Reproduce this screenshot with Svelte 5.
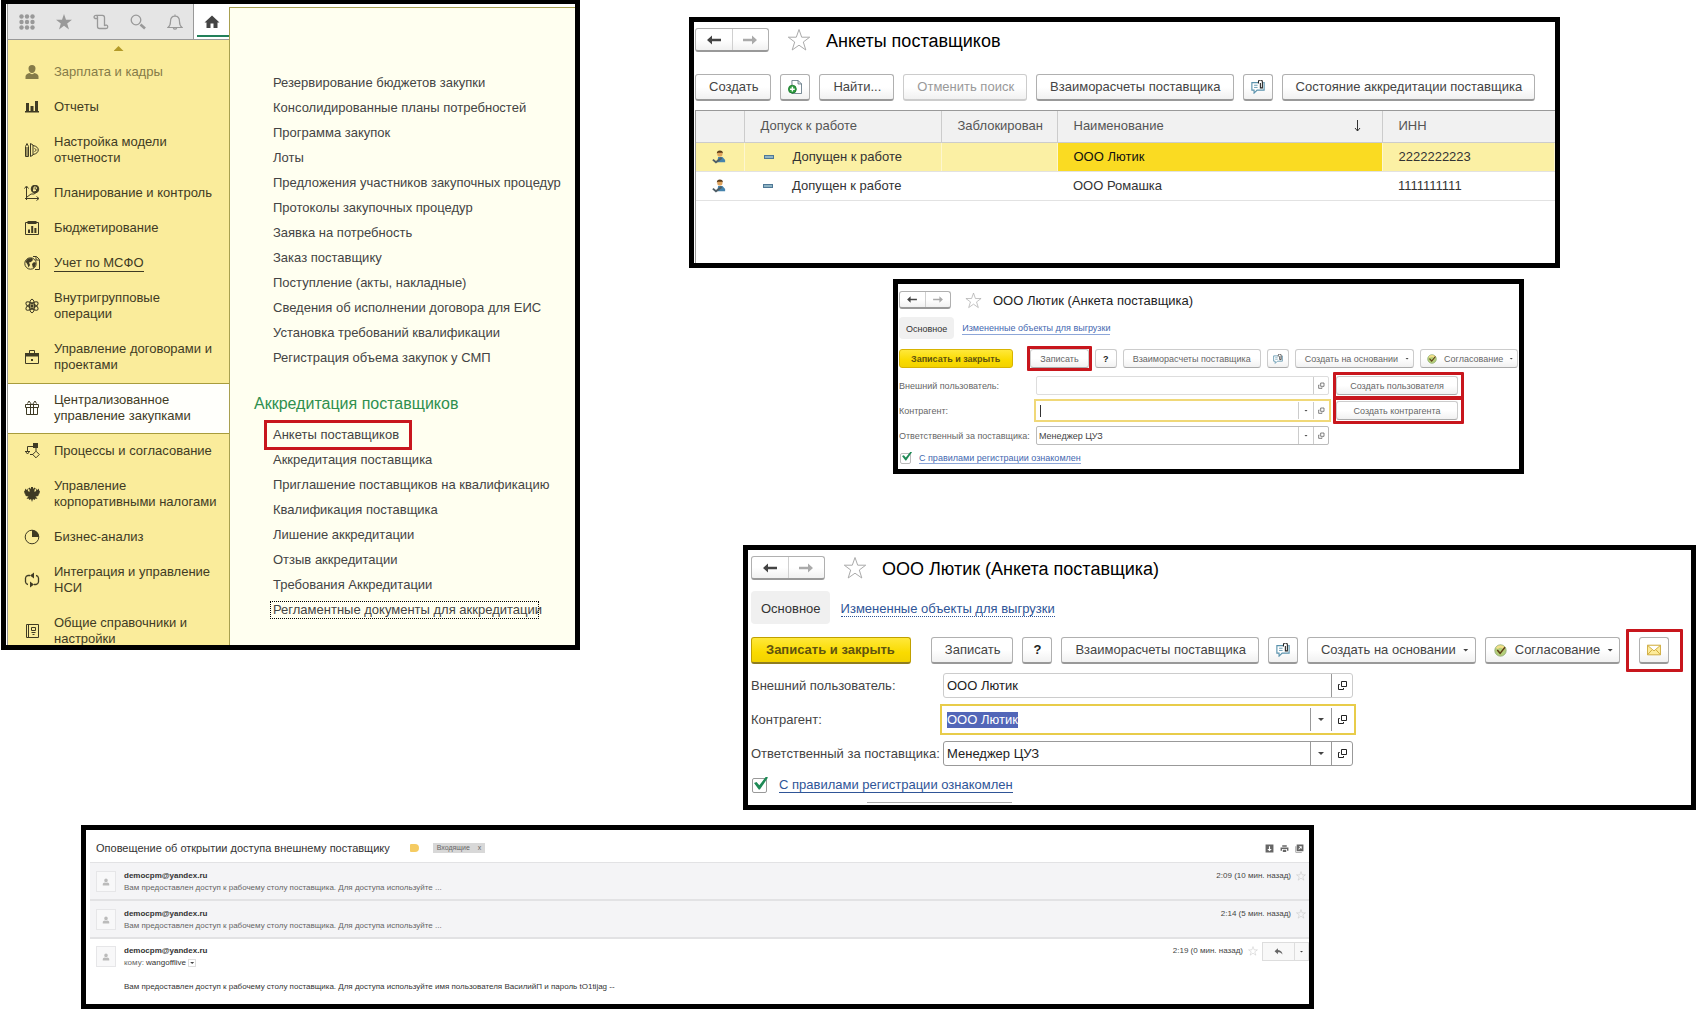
<script lang="ts">
	type Section = { icon: string; label: string; state?: string };
	type Field = { label: string; value: string; state?: string; dropdown?: boolean; action?: string };
	type Card = { id: string; size: string; fields: Field[]; mail?: boolean; markSave?: boolean };

	const tools = ['grid', 'star', 'scroll', 'search', 'bell'];

	const sections: Section[] = [
		{ icon: 'person', label: 'Зарплата и кадры', state: 'faded' },
		{ icon: 'bars', label: 'Отчеты' },
		{ icon: 'ruler', label: 'Настройка модели отчетности' },
		{ icon: 'plan', label: 'Планирование и контроль' },
		{ icon: 'budget', label: 'Бюджетирование' },
		{ icon: 'globe', label: 'Учет по МСФО', state: 'hovered' },
		{ icon: 'atom', label: 'Внутригрупповые операции' },
		{ icon: 'case', label: 'Управление договорами и проектами' },
		{ icon: 'gift', label: 'Централизованное управление закупками', state: 'active' },
		{ icon: 'process', label: 'Процессы и согласование' },
		{ icon: 'eagle', label: 'Управление корпоративными налогами' },
		{ icon: 'pie', label: 'Бизнес-анализ' },
		{ icon: 'sync', label: 'Интеграция и управление НСИ' },
		{ icon: 'book', label: 'Общие справочники и настройки' }
	];

	const purchases = [
		'Резервирование бюджетов закупки',
		'Консолидированные планы потребностей',
		'Программа закупок',
		'Лоты',
		'Предложения участников закупочных процедур',
		'Протоколы закупочных процедур',
		'Заявка на потребность',
		'Заказ поставщику',
		'Поступление (акты, накладные)',
		'Сведения об исполнении договора для ЕИС',
		'Установка требований квалификации',
		'Регистрация объема закупок у СМП'
	];

	const accreditation = [
		{ label: 'Анкеты поставщиков', state: 'boxed' },
		{ label: 'Аккредитация поставщика' },
		{ label: 'Приглашение поставщиков на квалификацию' },
		{ label: 'Квалификация поставщика' },
		{ label: 'Лишение аккредитации' },
		{ label: 'Отзыв аккредитации' },
		{ label: 'Требования Аккредитации' },
		{ label: 'Регламентные документы для аккредитации', state: 'focused' }
	];

	const suppliers = [
		{ name: 'ООО Лютик', inn: '2222222223', selected: true },
		{ name: 'ООО Ромашка', inn: '1111111111', selected: false }
	];

	const draft: Card = {
		id: 'draft',
		size: 'small',
		markSave: true,
		fields: [
			{ label: 'Внешний пользователь:', value: '', state: 'pale', action: 'Создать пользователя' },
			{ label: 'Контрагент:', value: '', state: 'current caret', dropdown: true, action: 'Создать контрагента' },
			{ label: 'Ответственный за поставщика:', value: 'Менеджер ЦУЗ', dropdown: true }
		]
	};

	const saved: Card = {
		id: 'saved',
		size: 'large',
		mail: true,
		fields: [
			{ label: 'Внешний пользователь:', value: 'ООО Лютик', state: 'pale' },
			{ label: 'Контрагент:', value: 'ООО Лютик', state: 'current selected', dropdown: true },
			{ label: 'Ответственный за поставщика:', value: 'Менеджер ЦУЗ', dropdown: true }
		]
	};

	const oldMessages = ['2:09 (10 мин. назад)', '2:14 (5 мин. назад)'];

	function preselect(node: HTMLInputElement, on: boolean) {
		if (on) {
			node.focus({ preventScroll: true });
			node.select();
		}
	}
</script>

{#snippet icon(name: string)}
	<svg class="icon" viewBox="0 0 16 16" aria-hidden="true" fill="none" stroke="currentColor">
		{#if name === 'grid'}
			<g fill="currentColor" stroke="none">
				{#each [2.5, 8, 13.5] as cx}
					{#each [2.5, 8, 13.5] as cy}
						<circle {cx} {cy} r="2.2" />
					{/each}
				{/each}
			</g>
		{:else if name === 'star'}
			<path fill="currentColor" stroke="none" d="M8 0l2 5.8h6l-4.8 3.6L13 15.4 8 11.8l-5 3.6 1.8-6L0 5.8h6z" />
		{:else if name === 'scroll'}
			<path stroke-width="1.3" d="M4 4.500H2a1.700 1.700 0 1 1 2.500-1.500v9.500a2 2 0 0 0 2 2H13a1.700 1.700 0 1 0-1.500-2.500V3.500a2.200 2.200 0 0 0-2-2.200H2.500" />
		{:else if name === 'search'}
			<circle cx="6" cy="6" r="4.8" stroke-width="1.3" />
			<path stroke-width="2.6" d="M10.5 10.5l4.5 4" />
		{:else if name === 'bell'}
			<path stroke-width="1.2" d="M8 .5V2M1 13.500c2-1.500 2.500-3 2.500-6C3.500 4 5.500 2.200 8 2.200S12.500 4 12.500 7.500c0 3 .5 4.500 2.500 6zM6.300 14a1.800 1.800 0 0 0 3.400 0" />
		{:else if name === 'home'}
			<path fill="currentColor" stroke="none" d="M8 1.500L.5 8.500h2V14h4V9.500h3V14h4V8.500h2z" />
		{:else if name === 'person'}
			<path fill="currentColor" stroke="none" d="M8 1a3.500 3.500 0 0 1 3.500 3.500C11.500 7 10 9 8 9S4.500 7 4.500 4.500A3.500 3.500 0 0 1 8 1zM1.500 15v-2.500c0-2 2-3 4-3.500 1.500 1.500 3.500 1.500 5 0 2 .5 4 1.500 4 3.500V15z" />
		{:else if name === 'bars'}
			<path fill="currentColor" stroke="none" d="M2 4h3v8h1.500V7h3v5H11V2h3v10h1v1.500H1V12h1z" />
		{:else if name === 'ruler'}
			<path d="M1.500 4.500L3 1.500l1.500 3v10h-3zM3 5v9M6.500 1.500v13M6.500 1.500l2.500 1.500v10l-2.500 1.500M9 3.500c7 1 7 8 0 9M10.500 6.500c2 .5 2 2.500 0 3" />
		{:else if name === 'plan'}
			<path d="M2.500 15V2M.5 3.500l2-2.500 2 2.500M1 13.500h13.500M12.500 11.500l2.500 2-2.500 2M3 12l4-3h3l3-2" />
			<circle cx="11" cy="4" r="3.8" fill="currentColor" />
			<path stroke="#faec9b" d="M10 6.500V2h1.500a1 1 0 0 1 0 2.200H9M9 5.500h3" />
		{:else if name === 'budget'}
			<path d="M1.500 2.500h13v12h-13z" />
			<path fill="currentColor" stroke="none" d="M3.500 1h9v3h-9zM4 9.500h2V13H4zM7.200 6h2v7h-2zM10.400 8h2v5h-2z" />
		{:else if name === 'globe'}
			<path d="M9 1.500h3.500l3 3v10H11M12 1.500v3.500h3" />
			<circle cx="6.500" cy="8.500" r="5.700" fill="#faec9b" />
			<path fill="currentColor" stroke="none" d="M1.500 6.500L4 3.500l4-.5 1 2-2 2-2 .5L6 10l-1.500 2.500-1-3zM8 9l2-2 2 1-1 3.500-2 1.500z" />
		{:else if name === 'atom'}
			<ellipse cx="8" cy="8" rx="2.6" ry="6.8" />
			<ellipse cx="8" cy="8" rx="2.6" ry="6.8" transform="rotate(60 8 8)" />
			<ellipse cx="8" cy="8" rx="2.6" ry="6.8" transform="rotate(120 8 8)" />
			<circle cx="8" cy="8" r="1.2" fill="currentColor" />
		{:else if name === 'case'}
			<path d="M1.500 4.500h13v10h-13zM5.500 4V1.500h5V4" />
			<path fill="currentColor" stroke="none" d="M1 4h14v3.500H1zM7 10h2v2H7z" />
		{:else if name === 'gift'}
			<path d="M1.500 4.500h13v3h-13zM2.500 7.500h11v7h-11zM6.500 4.500v10M9.500 4.500v10M7.500 4.500L5 1 3.500 3.500M8.500 4.500L11 1l1.500 2.500" />
		{:else if name === 'process'}
			<path d="M9 3.500H3.500V8M1 8.500h5M1.500 8.500l2 2.500 2-2.500M6 11.500h3M12 5v3M12 8.200l3.300 3.300-3.300 3.300-3.300-3.300z" />
			<path fill="currentColor" stroke="none" d="M9 0h5v5H9z" />
		{:else if name === 'eagle'}
			<path fill="currentColor" stroke="none" d="M7 1h2v2l1.500-1.500L12 3l-1.500.5V6L12 5l.5-2.500 1 1.500L15 2.500V5l1-.5-.5 3-1 .5.5 1-2 1.500-1.500-.5 2 3-2-.5-1 1.500L9 13l-1 3-1-3-1.500 1L4.500 12.500l-2 .5 2-3-1.500.5L1 9l.5-1-1-.5L0 4.500l1 .5V2.500L2.500 4l1-1.500L4 5l1.500 1V3.500L4 3l1.500-1.500L7 3z" />
		{:else if name === 'pie'}
			<circle cx="8" cy="8" r="6.8" />
			<path fill="currentColor" stroke="none" d="M8 1a7 7 0 0 1 7 7H8z" />
		{:else if name === 'sync'}
			<path stroke-width="1.3" d="M6 3.500H4A3 3 0 0 0 1.500 6v4A3 3 0 0 0 4 12.500M10 12.500h2a3 3 0 0 0 2.500-2.500V6A3 3 0 0 0 12 3.500" />
			<path fill="currentColor" stroke="none" d="M10 .5v6l-4-3zM6 9.500v6l4-3z" />
		{:else if name === 'book'}
			<path d="M2.500 1.500h12v13h-12zM4.500 1.500v13M7.500 4.500h4v3h-4zM7.500 9.500h4M8.500 11.500h2" />
		{:else if name === 'copy'}
			<path stroke="#5e7480" fill="#fff" d="M4.500.5h7l4 4v11h-11zM11.500.5v4h4" />
			<circle cx="5" cy="10.500" r="4.500" fill="#2f9e41" stroke="#1d7a2e" />
			<path stroke="#fff" stroke-width="1.6" d="M2.300 10.500h5.400M5 7.800v5.400" />
		{:else if name === 'clip'}
			<path stroke="#5b93ad" stroke-width="1.3" fill="#fff" d="M8 3H1v8.500h2.500V15L7 11.500h8V3h-1" />
			<path stroke="#5b93ad" d="M3.500 6h4M3.500 8.500h4" />
			<path stroke="#222" stroke-width="1.2" d="M8.500 4V2.200a2.200 2.200 0 0 1 4.500 0V9h-2.300V3.500" />
		{:else if name === 'approve'}
			<circle cx="8" cy="8" r="7" fill="#b5cf7a" stroke="#8fa873" />
			<path stroke="#f3e08a" stroke-width="3" d="M3.500 5.500a5.500 5.500 0 0 1 9 0" />
			<path stroke="#5d3d16" stroke-width="1.8" d="M4 7.500l3.500 4L13.500 4" />
		{:else if name === 'mail'}
			<path stroke="#c9a22f" fill="#fdeb9a" d="M.5 2.500h15v11H.5zM1 3l7 6 7-6M1 13l4.500-5M15 13l-4.500-5" />
		{:else if name === 'open'}
			<path stroke-width="1.33" d="M7.330 2H14v6.670H7.330zM5 6H3.330v6.670H10v-2" />
		{:else if name === 'supplier'}
			<path fill="#4583ad" stroke="none" d="M7 8h5l3 3.500V14H6z" />
			<circle cx="9" cy="4.500" r="3" fill="#e0a35c" stroke="none" />
			<path fill="#5b3b18" stroke="none" d="M5.500 4a3.500 3.500 0 0 1 7 0l-1-.8H7z" />
			<path stroke="#4f5e66" stroke-width="2.2" d="M1 11l3.500 3L11 9" />
		{:else if name === 'down'}
			<path fill="currentColor" stroke="none" d="M1 1h14v14H1zM7 4v5H4l4 4 4-4H9V4z" fill-rule="evenodd" />
		{:else if name === 'print'}
			<path fill="currentColor" stroke="none" d="M4 2h8v3H4zM1 6h14v6h-2.500V9h-9v3H1zM5 10h6v4H5z" />
		{:else if name === 'window'}
			<path fill="currentColor" stroke="none" d="M3 1h12v12H3zM1 4v11h11v-1H2V4zM7 4h5v5l-2-2-3 3-1-1 3-3z" fill-rule="evenodd" />
		{:else if name === 'reply'}
			<path fill="currentColor" stroke="none" d="M7 2v3.500c5 .5 8 3.500 8 8-2-3-4-4-8-4V13L1 7.500z" />
		{/if}
	</svg>
{/snippet}

{#snippet star()}
	<svg class="star" viewBox="0 0 24 24" aria-hidden="true">
		<path fill="none" stroke="currentColor" d="M12 1.500l2.700 7.700h8L16.300 14l2.500 8-6.800-4.800L5.200 22l2.500-8-6.400-4.800h8z" />
	</svg>
{/snippet}

{#snippet heading(title: string)}
	<header class="heading">
		<div class="history">
			<button aria-label="Назад"><svg viewBox="0 0 14 10"><path d="M0 5l5-4.500v3.300h9v2.400H5v3.300z" /></svg></button>
			<button aria-label="Вперед" disabled><svg viewBox="0 0 14 10"><path d="M14 5L9 .5v3.300H0v2.400h9v3.300z" /></svg></button>
		</div>
		{@render star()}
		<h1>{title}</h1>
	</header>
{/snippet}

{#snippet card(c: Card)}
	<section class="window card {c.size}">
		{@render heading('ООО Лютик (Анкета поставщика)')}
		<nav class="tabs">
			<a class="tab" href="#main">Основное</a>
			<a class="dotted" href="#export">Измененные объекты для выгрузки</a>
		</nav>
		<div class="toolbar">
			<button class="btn primary">Записать и закрыть</button>
			<button class="btn" class:marked={c.markSave}>Записать</button>
			<button class="btn square help">?</button>
			<button class="btn">Взаиморасчеты поставщика</button>
			<button class="btn square" aria-label="Вложения">{@render icon('clip')}</button>
			<button class="btn more">Создать на основании<i></i></button>
			<button class="btn more approve">{@render icon('approve')}Согласование<i></i></button>
			{#if c.mail}
				<button class="btn square send marked" aria-label="Отправить письмо">{@render icon('mail')}</button>
			{/if}
		</div>
		<div class="fields">
			{#each c.fields as field, i}
				<div class="field">
					<label for="{c.id}-{i}">{field.label}</label>
					<div class="box {field.state}">
						<input id="{c.id}-{i}" value={field.value} use:preselect={field.state === 'current selected'} />
						{#if field.dropdown}
							<button class="arrow" aria-label="Выбрать"><i></i></button>
						{/if}
						<button class="open" aria-label="Открыть">{@render icon('open')}</button>
					</div>
					{#if field.action}
						<button class="btn action marked">{field.action}</button>
					{/if}
				</div>
			{/each}
		</div>
		<div class="rules">
			<input type="checkbox" id="{c.id}-rules" checked />
			<label for="{c.id}-rules"><a href="#rules">С правилами регистрации ознакомлен</a></label>
		</div>
		{#if c.mail}
			<div class="cut"></div>
		{/if}
	</section>
{/snippet}

<main>
	<div class="columns">
		<section class="window menu">
			<aside>
				<div class="tools">
					{#each tools as tool}
						<button aria-label={tool}>{@render icon(tool)}</button>
					{/each}
					<button class="home" aria-label="home">{@render icon('home')}</button>
				</div>
				<nav class="sections">
					<div class="scroll-up"></div>
					{#each sections as section}
						<a class="section {section.state}" href="#section">
							{@render icon(section.icon)}
							<span>{section.label}</span>
						</a>
					{/each}
				</nav>
			</aside>
			<nav class="commands">
				<ul>
					{#each purchases as label}
						<li><a href="#command">{label}</a></li>
					{/each}
				</ul>
				<h2>Аккредитация поставщиков</h2>
				<ul>
					{#each accreditation as item}
						<li><a class={item.state} href="#command">{item.label}</a></li>
					{/each}
				</ul>
			</nav>
		</section>

		<div class="right">
			<section class="window list">
				{@render heading('Анкеты поставщиков')}
				<div class="toolbar">
					<button class="btn">Создать</button>
					<button class="btn square" aria-label="Скопировать">{@render icon('copy')}</button>
					<button class="btn">Найти...</button>
					<button class="btn" disabled>Отменить поиск</button>
					<button class="btn">Взаиморасчеты поставщика</button>
					<button class="btn square" aria-label="Вложения">{@render icon('clip')}</button>
					<button class="btn">Состояние аккредитации поставщика</button>
				</div>
				<div class="table">
					<table>
						<colgroup>
							<col class="c-icon" /><col class="c-access" /><col class="c-block" /><col class="c-name" /><col />
						</colgroup>
						<thead>
							<tr>
								<th></th>
								<th>Допуск к работе</th>
								<th>Заблокирован</th>
								<th><span class="sorted">Наименование
									<svg viewBox="0 0 7 12" aria-hidden="true"><path d="M3.500 0v11M1 8l2.500 3L6 8" /></svg></span></th>
								<th>ИНН</th>
							</tr>
						</thead>
						<tbody>
							{#each suppliers as supplier}
								<tr class:selected={supplier.selected}>
									<td class="who">{@render icon('supplier')}</td>
									<td><span class="access"><i></i>Допущен к работе</span></td>
									<td></td>
									<td class="name">{supplier.name}</td>
									<td>{supplier.inn}</td>
								</tr>
							{/each}
						</tbody>
					</table>
				</div>
			</section>

			{@render card(draft)}
			{@render card(saved)}
		</div>
	</div>

	<section class="window inbox">
		<header class="subject">
			<h3>Оповещение об открытии доступа внешнему поставщику</h3>
			<span class="flag"></span>
			<span class="chip">Входящие <b>x</b></span>
			<span class="actions">
				{@render icon('down')}
				{@render icon('print')}
				{@render icon('window')}
			</span>
		</header>
		{#each oldMessages as time}
			<article class="message old">
				<span class="avatar">{@render icon('person')}</span>
				<div class="text">
					<strong>democpm@yandex.ru</strong>
					<p>Вам предоставлен доступ к рабочему столу поставщика. Для доступа используйте ...</p>
				</div>
				<time>{time}</time>
				{@render star()}
			</article>
		{/each}
		<article class="message">
			<span class="avatar">{@render icon('person')}</span>
			<div class="text">
				<strong>democpm@yandex.ru</strong>
				<p>кому: <em>wangofflive</em> <button class="details" aria-label="Подробнее"><i></i></button></p>
				<p class="body">Вам предоставлен доступ к рабочему столу поставщика. Для доступа используйте имя пользователя ВасилийП и пароль tO1tijag --</p>
			</div>
			<time>2:19 (0 мин. назад)</time>
			{@render star()}
			<div class="reply">
				<button aria-label="Ответить">{@render icon('reply')}</button>
				<button aria-label="Еще"><i></i></button>
			</div>
		</article>
	</section>
</main>

<style>
	:global(body) {
		background: #fff;
	}

	* {
		box-sizing: border-box;
	}

	main {
		font: 13px/16px 'Liberation Sans', Arial, sans-serif;
		color: #444;
		overflow: hidden;
	}

	a {
		color: inherit;
		text-decoration: none;
	}

	button,
	input {
		font: inherit;
		color: inherit;
		margin: 0;
	}

	button {
		padding: 0;
		border: none;
		background: none;
	}

	h1,
	h2,
	h3,
	p,
	ul {
		margin: 0;
		padding: 0;
		font-weight: normal;
	}

	.icon {
		width: 16px;
		height: 16px;
		flex: none;
		display: block;
	}

	.columns {
		display: grid;
		grid-template-columns: 290fr 558fr;
		align-items: start;
	}

	.window {
		border: 5px solid #000;
		background: #fff;
	}

	/* sections and commands */
	.menu {
		display: flex;
		max-height: 650px;
		margin-left: 1px;
		border-top-width: 4px;
		overflow: hidden;
	}

	aside {
		flex: none;
		width: 222px;
		margin-left: 1px;
		border-left: 1px solid #999;
	}

	.tools {
		display: flex;
		height: 36px;
		background: #e5e5e5;
		border-bottom: 1px solid #999;
		color: #999;
	}

	.tools button {
		flex: 0 0 37px;
		display: flex;
		align-items: center;
		justify-content: center;
	}

	.tools .home {
		flex: 1;
		border-left: 1px solid #999;
		background: linear-gradient(#22805a, #22805a) 3px 31px / 100% 2px no-repeat #fff;
		color: #444;
	}

	.sections {
		background: #faec9b;
	}

	.scroll-up {
		height: 15px;
		padding-top: 6px;
	}

	.scroll-up::before {
		content: '';
		display: block;
		width: 10px;
		height: 5px;
		margin: 0 auto;
		background: #b39a28;
		clip-path: polygon(50% 0, 100% 100%, 0 100%);
	}

	.section {
		display: flex;
		align-items: center;
		gap: 14px;
		padding: 9px 10px 10px 16px;
		color: #3f3b24;
	}

	.section.faded {
		color: #857b48;
	}

	.section.hovered span {
		border-bottom: 1px solid #3f3b24;
		margin-bottom: -1px;
	}

	.section.active {
		padding-top: 8px;
		padding-bottom: 9px;
		border: 1px solid #a89c3c;
		border-width: 1px 0;
		background: #fffffb;
	}

	.commands {
		flex: 1;
		min-width: 0;
		margin-top: 3px;
		padding: 62px 0 24px 24px;
		border: 1px solid #a8a050;
		border-width: 1px 0 0 1px;
		background: #fffff0;
		white-space: nowrap;
	}

	.commands ul {
		list-style: none;
		padding-left: 19px;
	}

	.commands li {
		display: flex;
		align-items: center;
		height: 25px;
	}

	.commands h2 {
		margin: 21px 0 6px;
		font-size: 16px;
		line-height: 25px;
		color: #2f8f4e;
	}

	.boxed {
		margin-left: -6px;
		padding: 4px 10px 4px 6px;
		outline: 3px solid #c8161d;
	}

	.focused {
		width: 269px;
		margin-left: -3px;
		padding-left: 2px;
		border: 1px dotted #000;
	}

	/* window parts */
	.right {
		min-width: 0;
	}

	.heading {
		display: flex;
		align-items: center;
		height: 24px;
	}

	.history {
		display: flex;
		width: 74px;
		height: 24px;
		border: 1px solid #b0b0b0;
		border-bottom: 2px solid #999;
		border-radius: 3px;
		background: linear-gradient(#fff 50%, #f1f1f1);
	}

	.history button {
		flex: 1;
		display: flex;
		align-items: center;
		justify-content: center;
	}

	.history button + button {
		border-left: 1px solid #d0d0d0;
	}

	.history svg {
		width: 14px;
		height: 10px;
		fill: #444;
	}

	.history button:disabled svg {
		fill: #aaa;
	}

	.star {
		flex: none;
		width: 24px;
		height: 24px;
		margin-left: 18px;
		color: #aaa;
	}

	h1 {
		margin-left: 15px;
		padding-top: 2px;
		font-size: 18px;
		line-height: 24px;
		color: #000;
		white-space: nowrap;
	}

	.toolbar {
		display: flex;
		gap: 9px;
	}

	.btn {
		flex: none;
		display: flex;
		align-items: center;
		justify-content: center;
		height: 27px;
		padding: 0 12px 0 13px;
		border: 1px solid #b0b0b0;
		border-bottom: 2px solid #999;
		border-radius: 3px;
		background: linear-gradient(#fff 50%, #f1f1f1);
		white-space: nowrap;
	}

	.btn:disabled {
		border-color: #ccc;
		color: #999;
	}

	.square {
		width: 30px;
		padding: 0;
	}

	.square .icon {
		width: 14px;
		height: 14px;
	}

	.primary {
		margin-right: 11px;
		padding: 0 15px 0 14px;
		border-color: #c0a000;
		border-bottom-color: #8f7d20;
		background: linear-gradient(#ffe83a, #fadb00 60%, #f2d200);
		font-weight: bold;
		color: #5f5310;
	}

	.help {
		font-weight: bold;
		color: #222;
	}

	i {
		display: block;
		width: 6px;
		height: 3px;
		background: #444;
		clip-path: polygon(0 0, 100% 0, 50% 100%);
	}

	.more {
		gap: 7px;
		padding-right: 6px;
	}

	.approve {
		padding-left: 8px;
	}

	.approve .icon {
		width: 13px;
		height: 13px;
		margin-right: 1px;
	}

	.marked {
		position: relative;
	}

	.marked::after {
		content: '';
		position: absolute;
		inset: -4px;
		border: 3px solid #c8161d;
		border-radius: 1px;
	}

	/* supplier list */
	.list {
		margin: 17px 136px 0 109px;
		padding: 6px 0 0 1px;
	}

	.list .toolbar {
		margin: 22px 0 9px;
	}

	.table {
		min-height: 153px;
		border: 1px solid #999;
		border-width: 1px 0 0 1px;
		overflow: hidden;
	}

	table {
		width: 100%;
		table-layout: fixed;
		border-collapse: collapse;
	}

	.c-icon {
		width: 48px;
	}

	.c-access {
		width: 197px;
	}

	.c-block {
		width: 116px;
	}

	.c-name {
		width: 325px;
	}

	th,
	td {
		padding: 0 0 0 16px;
		text-align: left;
		font-weight: normal;
		white-space: nowrap;
	}

	th {
		height: 31px;
		border-right: 1px solid #ccc;
		border-bottom: 1px solid #ccc;
		background: #f1f1f1;
		color: #555;
	}

	td {
		height: 29px;
		border-bottom: 1px solid #e2e2e2;
		color: #333;
	}

	th:last-child {
		border-right: none;
	}

	.selected td {
		border-right: 1px solid #fdf6cf;
		background: #fbf0a4;
	}

	.selected .name {
		background: #fadb22;
		color: #111;
	}

	.who .icon {
		width: 14px;
		height: 14px;
	}

	.sorted {
		display: flex;
		align-items: center;
		justify-content: space-between;
		padding-right: 21px;
	}

	.sorted svg {
		width: 7px;
		height: 12px;
		fill: none;
		stroke: #333;
	}

	.access {
		display: flex;
		align-items: center;
		gap: 19px;
		padding-left: 3px;
	}

	.access i {
		width: 10px;
		height: 4px;
		border: 1px solid #4f7896;
		background: #8fb4c4;
		clip-path: none;
	}

	/* supplier card */
	.card {
		padding: 6px 0 2px 3px;
	}

	.large {
		margin: 71px 0 0 163px;
	}

	.tabs {
		display: flex;
		align-items: center;
		gap: 11px;
		height: 33px;
		margin: 11px 0 13px;
	}

	.tab {
		height: 100%;
		padding: 10px 9px 0 10px;
		border-radius: 4px;
		background: #f0f0f0;
		color: #333;
	}

	.dotted {
		padding-top: 2px;
		border-bottom: 1px dotted #2f5597;
		line-height: 15px;
		color: #2f5597;
	}

	.fields {
		display: grid;
		gap: 9px;
		margin-top: 9px;
	}

	.field {
		display: grid;
		grid-template-columns: 192px minmax(0, 410px) auto;
		justify-content: start;
		align-items: center;
		height: 25px;
		white-space: nowrap;
	}

	.box {
		display: flex;
		height: 100%;
		border: 1px solid #999;
		border-radius: 3px;
		color: #222;
	}

	.box input {
		flex: 1;
		min-width: 0;
		padding: 0 3px;
		border: none;
		outline: none;
		background: none;
	}

	.box input::selection {
		background: #5266b8;
		color: #fff;
	}

	.box button {
		display: flex;
		align-items: center;
		justify-content: center;
		width: 21px;
		border-left: 1px solid #999;
	}

	.box .icon {
		width: 12px;
		height: 12px;
	}

	.pale {
		border-color: #ccc;
	}

	.current {
		border-color: transparent;
		border-radius: 0;
		outline: 2px solid #e8cc4a;
		outline-offset: 1px;
	}

	.caret input {
		background: linear-gradient(#333, #333) 3px center / 1px 12px no-repeat;
	}

	.rules {
		display: flex;
		align-items: center;
		gap: 12px;
		height: 22px;
		margin: 8px 0 0 1px;
	}

	.rules input {
		appearance: none;
		position: relative;
		width: 15px;
		height: 15px;
		border: 1px solid #999;
		border-radius: 2px;
	}

	.rules input::before {
		content: '';
		position: absolute;
		inset: -2px -2px 2px 1px;
		background: #1f8a56;
		clip-path: polygon(0 50%, 18% 42%, 38% 68%, 86% 0, 100% 8%, 42% 100%, 34% 100%);
	}

	.rules a {
		border-bottom: 1px solid #2f5597;
		color: #2f5597;
	}

	.send {
		margin-left: 10px;
	}

	.send.marked::after {
		inset: -9px -15px -10px -14px;
	}

	.cut {
		width: 145px;
		height: 1px;
		margin: 6px 0 0 116px;
		background: #aaa;
	}

	.small {
		margin: 11px 172px 0 313px;
		padding: 7px 0 3px 1px;
		font-size: 9px;
		line-height: 12px;
		color: #666;
	}

	.small .heading {
		height: 18px;
	}

	.small .history {
		width: 52px;
		height: 18px;
	}

	.small .history svg {
		width: 10px;
		height: 7px;
	}

	.small .star {
		width: 17px;
		height: 17px;
		margin-left: 14px;
	}

	.small h1 {
		margin-left: 11px;
		font-size: 13px;
		line-height: 18px;
		color: #222;
	}

	.small .tabs {
		gap: 8px;
		height: 22px;
		margin: 8px 0 10px;
	}

	.small .tab {
		padding: 6px 7px 0;
	}

	.small .dotted {
		line-height: 11px;
		border-bottom: 1px solid #8da6d8;
		color: #4467b0;
	}

	.small .toolbar {
		gap: 6px;
	}

	.small .btn {
		height: 19px;
		padding: 0 9px;
		border: 1px solid #ccc;
		border-bottom-color: #aaa;
	}

	.small .primary {
		margin-right: 11px;
		padding: 0 12px 0 11px;
		border-color: #d8b400;
	}

	.small .square {
		width: 22px;
		padding: 0;
	}

	.small .square .icon,
	.small .approve .icon {
		width: 10px;
		height: 10px;
	}

	.small .more {
		padding-right: 4px;
	}

	.small .approve {
		gap: 6px;
		padding-left: 6px;
	}

	.small i {
		width: 4px;
		height: 2px;
	}

	.small .fields {
		gap: 6px;
		margin-top: 8px;
	}

	.small .field {
		grid-template-columns: 137px minmax(0, 293px) auto;
		height: 19px;
	}

	.small .box {
		border-color: #bbb;
		border-radius: 2px;
		color: #444;
	}

	.small .box.pale {
		border-color: #ddd;
	}

	.small .box.current {
		border-color: transparent;
		border-radius: 0;
		outline-color: #f0d878;
		outline-offset: 0;
	}

	.small .box input {
		padding: 0 2px;
	}

	.small .box button {
		width: 15px;
		border-color: #ccc;
	}

	.small .box .icon {
		width: 8px;
		height: 8px;
	}

	.small .action {
		width: 122px;
		margin-left: 7px;
	}

	.action.marked::after {
		inset: -5px -7px -5px -4px;
	}

	.small .rules {
		gap: 8px;
		height: 16px;
		margin-top: 5px;
	}

	.small .rules input {
		width: 11px;
		height: 11px;
		border-color: #bbb;
	}

	.small .rules a {
		border-color: #8da6d8;
		color: #4467b0;
	}

	/* mailbox */
	.inbox {
		margin: 15px 382px 0 81px;
		padding: 0 0 11px 4px;
		font-size: 8px;
		line-height: 12px;
		color: #666;
	}

	.subject {
		display: flex;
		align-items: center;
		height: 33px;
		padding: 4px 5px 0 6px;
		border-bottom: 1px solid #e2e2e4;
	}

	.subject h3 {
		font-size: 11px;
		color: #333;
	}

	.flag {
		width: 9px;
		height: 8px;
		margin: 0 14px 0 20px;
		border-radius: 1px 4px 4px 1px;
		background: #f5cb62;
	}

	.chip {
		padding: 0 4px;
		background: #d8d8d8;
		font-size: 7px;
		line-height: 10px;
	}

	.chip b {
		margin-left: 6px;
		font-weight: normal;
	}

	.actions {
		display: flex;
		gap: 6px;
		margin-left: auto;
		color: #666;
	}

	.actions .icon {
		width: 9px;
		height: 9px;
	}

	.message {
		display: flex;
		align-items: start;
		padding: 6px 0 0 6px;
	}

	.old {
		height: 38px;
		padding: 7px 3px 0 6px;
		border-bottom: 2px solid #e2e2e4;
		background: #f4f4f6;
	}

	.avatar {
		display: flex;
		align-items: center;
		justify-content: center;
		width: 20px;
		height: 21px;
		margin: 1px 8px 0 0;
		border: 1px solid #e6e6e8;
		background: #f8f8f9;
		color: #bbb;
	}

	.avatar .icon {
		width: 8px;
		height: 8px;
	}

	.text {
		flex: 1;
	}

	.text strong {
		display: block;
		color: #333;
	}

	.text em {
		font-style: normal;
		color: #333;
	}

	.text .body {
		margin-top: 12px;
		color: #333;
	}

	.details {
		display: inline-flex;
		align-items: center;
		justify-content: center;
		width: 8px;
		height: 8px;
		border: 1px solid #ddd;
		vertical-align: middle;
	}

	.details i {
		width: 4px;
		height: 2px;
	}

	time {
		color: #444;
	}

	.inbox .star {
		width: 10px;
		height: 10px;
		margin: 1px 0 0 5px;
		color: #bbb;
	}

	.reply {
		display: flex;
		width: 47px;
		height: 19px;
		margin: -3px 0 0 4px;
		border: 1px solid #ddd;
		background: #f8f8f8;
		color: #666;
	}

	.reply button {
		display: flex;
		align-items: center;
		justify-content: center;
		flex: 1;
	}

	.reply button + button {
		flex: 0 0 14px;
		border-left: 1px solid #ddd;
	}

	.reply .icon {
		width: 9px;
		height: 9px;
	}

	.reply i {
		width: 4px;
		height: 2px;
	}
</style>
